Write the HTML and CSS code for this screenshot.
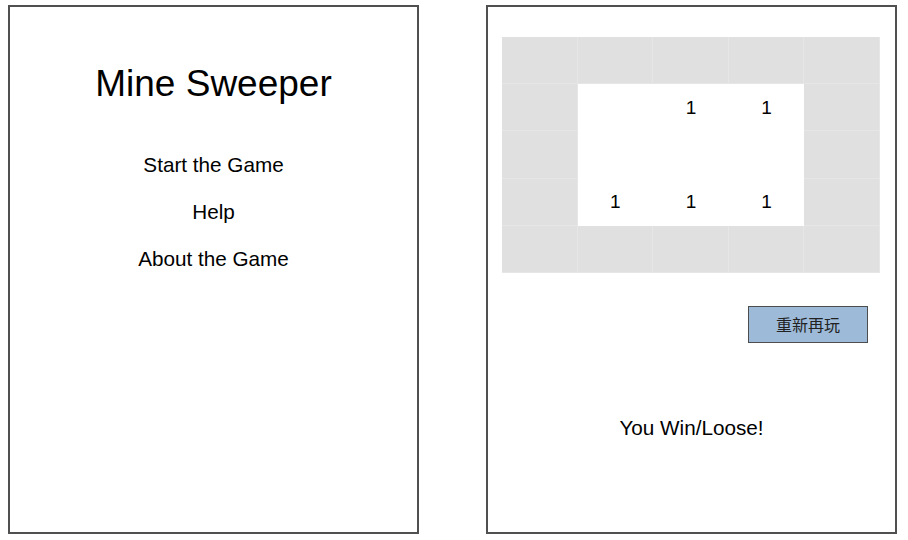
FILE: index.html
```html
<!DOCTYPE html>
<html lang="en">
<head>
<meta charset="utf-8">
<title>Mine Sweeper</title>
<link rel="stylesheet" href="styles.css">
</head>
<body>
<div class="screens">
  <section class="panel menu-panel">
    <h1 class="title">Mine Sweeper</h1>
    <ul class="menu">
      <li class="menu-item">Start the Game</li>
      <li class="menu-item">Help</li>
      <li class="menu-item">About the Game</li>
    </ul>
  </section>
  <section class="panel game-panel">
    <div class="board">
      <div class="cell hidden"></div><div class="cell hidden"></div><div class="cell hidden"></div><div class="cell hidden"></div><div class="cell hidden"></div>
      <div class="cell hidden"></div><div class="cell open"></div><div class="cell open">1</div><div class="cell open">1</div><div class="cell hidden"></div>
      <div class="cell hidden"></div><div class="cell open"></div><div class="cell open"></div><div class="cell open"></div><div class="cell hidden"></div>
      <div class="cell hidden"></div><div class="cell open">1</div><div class="cell open">1</div><div class="cell open">1</div><div class="cell hidden"></div>
      <div class="cell hidden"></div><div class="cell hidden"></div><div class="cell hidden"></div><div class="cell hidden"></div><div class="cell hidden"></div>
    </div>
    <div class="actions">
      <button class="replay" type="button">重新再玩</button>
    </div>
    <p class="result">You Win/Loose!</p>
  </section>
</div>
</body>
</html>
```

FILE: styles.css
```css
* { box-sizing: border-box; }

html, body {
  margin: 0;
  padding: 0;
  background: #ffffff;
}

body {
  font-family: "Liberation Sans", Arial, sans-serif;
  color: #000;
}

.screens {
  display: flex;
  gap: 67px;
  padding: 5px 0 0 8px;
}

.panel {
  width: 411px;
  height: 529px;
  border: 2px solid #505050;
  background: #fff;
}

.menu-panel {
  display: flex;
  flex-direction: column;
  align-items: center;
  padding-top: 55px;
}

.title {
  margin: 0;
  font-size: 37px;
  line-height: 44px;
  font-weight: normal;
}

.menu {
  list-style: none;
  margin: 35px 0 0;
  padding: 0;
  text-align: center;
}

.menu-item {
  font-size: 20.7px;
  line-height: 47px;
}

.game-panel {
  display: flex;
  flex-direction: column;
  padding: 30px 14px 0 14px;
}

.board {
  width: 378px;
  height: 236px;
  display: grid;
  grid-template-columns: repeat(5, 1fr);
  grid-template-rows: repeat(5, 1fr);
  background: #e0e0e0;
}

.cell {
  display: flex;
  align-items: center;
  justify-content: center;
  font-size: 19px;
}

.cell.hidden {
  background: #e0e0e0;
  box-shadow: inset -1px -1px 0 #e6e6e6;
}

.cell.open {
  background: #ffffff;
}

.actions {
  display: flex;
  justify-content: flex-end;
  margin-top: 33px;
  padding-right: 13px;
}

.replay {
  width: 120px;
  height: 37px;
  margin: 0;
  padding: 0;
  border: 1px solid #4d4d4d;
  background: #9dbbd9;
  color: #222;
  font-family: "Noto Sans CJK TC", "Noto Sans CJK SC", sans-serif;
  font-size: 16px;
  line-height: 35px;
}

.result {
  margin: 73px 0 0;
  text-align: center;
  font-size: 20.7px;
  line-height: 24px;
}
```
